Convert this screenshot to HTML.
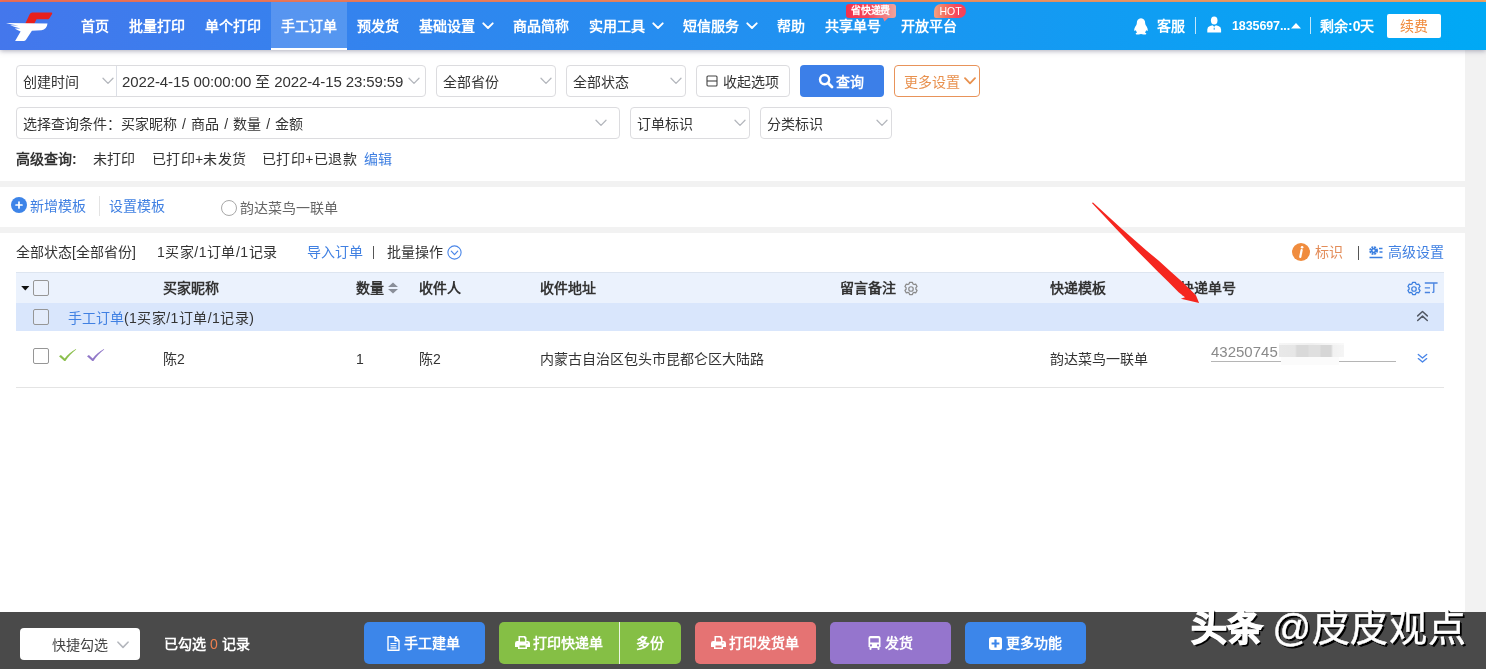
<!DOCTYPE html>
<html lang="zh-CN">
<head>
<meta charset="utf-8">
<title>手工订单</title>
<style>
*{box-sizing:border-box;margin:0;padding:0}
html,body{width:1486px;height:669px;overflow:hidden}
body{font-family:"Liberation Sans",sans-serif;font-size:14px;color:#333;background:#f2f2f2;position:relative}
.abs{position:absolute}
.t{position:absolute;white-space:nowrap;line-height:20px;height:20px}
.b{font-weight:bold}
.blue{color:#4080e2}
/* top */
#topline{left:0;top:0;width:1486px;height:2px;background:linear-gradient(90deg,#fa6e50,#f8a862)}
#nav{z-index:5;left:0;top:2px;width:1486px;height:48px;background:linear-gradient(90deg,#4477ec,#00a9f5);box-shadow:0 1px 5px rgba(90,90,120,.5)}
#nav .t{color:#fff;font-weight:bold;top:14px}
#tab{left:271px;top:0;width:76px;height:48px;background:rgba(255,255,255,.16);border-bottom:2px solid #fff}
.sep{position:absolute;width:1px;background:rgba(255,255,255,.75)}
/* panels */
.panel{position:absolute;left:0;width:1465px;background:#fff}
.sel{position:absolute;height:31px;border:1px solid #dcdcdf;border-radius:4px;background:#fff}
.sel .t{top:5px;left:6px;color:#333}
.chev{position:absolute;top:11px;width:12px;height:8px}
/* table */
.cb{position:absolute;width:15px;height:15px;border:1px solid #969696;border-radius:2px;background:#fff}
/* bottom */
#bot{left:0;top:612px;width:1486px;height:57px;background:#4a4a4a}
.btn{position:absolute;top:10px;height:42px;border-radius:5px;color:#fff;font-weight:bold}
.btn .t{top:10px;color:#fff}
</style>
</head>
<body>
<div id="root" style="position:absolute;left:0;top:0;width:1486px;height:669px;will-change:transform">
<div class="abs" id="topline"></div>
<div class="abs" id="nav">
  <div class="abs" id="tab"></div>
  <svg class="abs" style="left:0;top:0" width="70" height="48" viewBox="0 2 70 48">
    <path d="M32.300 12.500H51.200Q52.800 12.500 52.100 13.900L49.300 18.600Q48.900 19.200 48 19.200H36.500L34.200 23.700H25.200L29.800 14Q30.500 12.500 32.300 12.500z" fill="#e8201c"/>
    <path d="M6 22.900L47.500 23.600Q46.800 29.600 41.500 30.300L31.900 30.800L26 39.700Q25.200 40.900 23.600 40.900L15.100 41.100L20.600 31.600Q17.200 30.300 14.600 28.600L20.500 28.400Q14.500 27.100 10.200 25.300L18.500 25.600Q11.500 24.500 6 22.900z" fill="#fff"/>
  </svg>
  <svg class="abs" style="left:482px;top:20px" width="12" height="8" viewBox="0 0 12 8"><path d="M1.300 1.300L6 6L10.700 1.300" fill="none" stroke="#fff" stroke-width="1.900" stroke-linecap="round" stroke-linejoin="round"/></svg><svg class="abs" style="left:652px;top:20px" width="12" height="8" viewBox="0 0 12 8"><path d="M1.300 1.300L6 6L10.700 1.300" fill="none" stroke="#fff" stroke-width="1.900" stroke-linecap="round" stroke-linejoin="round"/></svg><svg class="abs" style="left:746px;top:20px" width="12" height="8" viewBox="0 0 12 8"><path d="M1.300 1.300L6 6L10.700 1.300" fill="none" stroke="#fff" stroke-width="1.900" stroke-linecap="round" stroke-linejoin="round"/></svg>
  <svg class="abs" style="left:1133px;top:16px" width="16" height="17" viewBox="0 0 16 17"><path d="M8 0.300C10.800 0.300 12.200 2.600 12.200 5.300C12.200 6 12.400 6.600 12.800 7.300C13.900 9 15.200 11 14.600 12.800C14.300 13.500 13.700 12.900 13.200 12.100C13.100 13.100 12.600 13.900 11.900 14.500C12.700 14.800 13.300 15.200 13.300 15.700C13.300 16.400 11.800 16.600 10.500 16.600C9.400 16.600 8.500 16.400 8 16.100C7.500 16.400 6.600 16.600 5.500 16.600C4.200 16.600 2.700 16.400 2.700 15.700C2.700 15.200 3.300 14.800 4.100 14.500C3.400 13.900 2.900 13.100 2.800 12.100C2.300 12.900 1.700 13.500 1.400 12.800C0.800 11 2.100 9 3.200 7.300C3.600 6.600 3.800 6 3.800 5.300C3.800 2.600 5.200 0.300 8 0.300z" fill="#fff"/></svg>
  <svg class="abs" style="left:1207px;top:14px" width="15" height="17" viewBox="0 0 15 17"><ellipse cx="7.200" cy="4.500" rx="3.300" ry="4.100" fill="#fff"/><path d="M0.300 16.500V13.500Q0.300 10.800 3 10L5.500 9.200L7.200 10.800L8.900 9.200L11.400 10Q14.100 10.800 14.100 13.500V16.500z" fill="#fff"/><rect x="6.700" y="11.700" width="1" height="2" fill="#12a0f5"/></svg>
  <svg class="abs" style="left:1291px;top:21px" width="10" height="6" viewBox="0 0 10 6"><path d="M0 5.500H10L5 0z" fill="#fff"/></svg>
  <div class="abs" style="left:846px;top:2px;width:50px;height:14px;border-radius:3px;background:linear-gradient(90deg,#f5304c 0%,#f3475a 45%,#f08f8f 85%,#efa59c 100%)"></div>
  <svg class="abs" style="left:882px;top:15px" width="8" height="5" viewBox="0 0 8 5"><path d="M0.500 0H7L2.500 4.500z" fill="#f07f84"/></svg>
  <span class="abs" style="left:851px;top:3px;font-size:10px;line-height:12px;color:#fff;font-weight:bold;white-space:nowrap;letter-spacing:-0.200px">省快递费</span>
  <div class="abs" style="left:934px;top:2px;width:32px;height:14px;border-radius:7px 7px 7px 2px;background:linear-gradient(90deg,#f2a184 0%,#f3705f 35%,#f5465c 70%,#f5405a 100%)"></div>
  <span class="abs" style="left:939.500px;top:2px;font-size:10.500px;line-height:14px;color:#fff;white-space:nowrap;letter-spacing:0">HOT</span>

  <span class="t" style="left:81px">首页</span>
  <span class="t" style="left:129px">批量打印</span>
  <span class="t" style="left:205px">单个打印</span>
  <span class="t" style="left:281px">手工订单</span>
  <span class="t" style="left:357px">预发货</span>
  <span class="t" style="left:419px">基础设置</span>
  <span class="t" style="left:513px">商品简称</span>
  <span class="t" style="left:589px">实用工具</span>
  <span class="t" style="left:683px">短信服务</span>
  <span class="t" style="left:777px">帮助</span>
  <span class="t" style="left:825px">共享单号</span>
  <span class="t" style="left:901px">开放平台</span>
  <span class="t" style="left:1157px">客服</span>
  <span class="t" style="left:1232px;font-size:12.500px;letter-spacing:-0.100px">1835697...</span>
  <span class="t" style="left:1320px">剩余:0天</span>
  <div class="sep" style="left:1195px;top:15px;height:17px"></div>
  <div class="sep" style="left:1310px;top:15px;height:17px"></div>
  <div class="abs" style="left:1387px;top:12px;width:54px;height:24px;background:#fff;border-radius:2px"></div>
  <span class="t" style="left:1400px;color:#f08a3c;font-weight:normal">续费</span>
</div>

<div class="panel" style="top:50px;height:131px"></div>
<div class="panel" style="top:187px;height:40px"></div>
<div class="panel" style="top:233px;height:379px"></div>


<!-- filter row 1 -->
<div class="sel" style="left:16px;top:65px;width:410px;height:32px"></div>
<div class="abs" style="left:116px;top:66px;width:1px;height:30px;background:#dcdfe6"></div>
<span class="t" style="left:23px;top:72px">创建时间</span>
<svg class="abs" style="left:102px;top:77px" width="12" height="8" viewBox="0 0 12 8"><path d="M1 1.2 L6 6.4 L11 1.2" fill="none" stroke="#b4b7bd" stroke-width="1.3" stroke-linecap="round" stroke-linejoin="round"/></svg>
<span class="t" style="left:122px;top:72px;font-size:15px;letter-spacing:-0.100px">2022-4-15 00:00:00 至 2022-4-15 23:59:59</span>
<svg class="abs" style="left:408px;top:77px" width="12" height="8" viewBox="0 0 12 8"><path d="M1 1.2 L6 6.4 L11 1.2" fill="none" stroke="#b4b7bd" stroke-width="1.3" stroke-linecap="round" stroke-linejoin="round"/></svg>
<div class="sel" style="left:436px;top:65px;width:120px;height:32px"></div>
<span class="t" style="left:443px;top:72px">全部省份</span>
<svg class="abs" style="left:540px;top:77px" width="12" height="8" viewBox="0 0 12 8"><path d="M1 1.2 L6 6.4 L11 1.2" fill="none" stroke="#b4b7bd" stroke-width="1.3" stroke-linecap="round" stroke-linejoin="round"/></svg>
<div class="sel" style="left:566px;top:65px;width:120px;height:32px"></div>
<span class="t" style="left:573px;top:72px">全部状态</span>
<svg class="abs" style="left:670px;top:77px" width="12" height="8" viewBox="0 0 12 8"><path d="M1 1.2 L6 6.4 L11 1.2" fill="none" stroke="#b4b7bd" stroke-width="1.3" stroke-linecap="round" stroke-linejoin="round"/></svg>
<div class="sel" style="left:696px;top:65px;width:94px;height:32px"></div>
<svg class="abs" style="left:706px;top:75px" width="12" height="12" viewBox="0 0 12 12"><rect x="1" y="1" width="10" height="10" rx="1" fill="none" stroke="#444" stroke-width="1.1"/><path d="M1 6H11" stroke="#444" stroke-width="1.1"/></svg>
<span class="t" style="left:723px;top:72px">收起选项</span>
<div class="abs" style="left:800px;top:65px;width:84px;height:32px;border-radius:4px;background:#3c7fe8"></div>
<svg class="abs" style="left:818px;top:73px" width="16" height="16" viewBox="0 0 16 16"><circle cx="6.6" cy="6.6" r="4.6" fill="none" stroke="#fff" stroke-width="2.4"/><path d="M10 10 L14 14" stroke="#fff" stroke-width="2.8" stroke-linecap="round"/></svg>
<span class="t b" style="left:836px;top:72px;color:#fff">查询</span>
<div class="abs" style="left:894px;top:65px;width:86px;height:32px;border-radius:4px;border:1px solid #e8935a;background:#fff"></div>
<span class="t" style="left:904px;top:72px;color:#e8914f">更多设置</span>
<svg class="abs" style="left:964px;top:77px" width="12" height="8" viewBox="0 0 12 8"><path d="M1 1.2 L6 6.4 L11 1.2" fill="none" stroke="#e8914f" stroke-width="1.8" stroke-linecap="round" stroke-linejoin="round"/></svg>
<!-- filter row 2 -->
<div class="sel" style="left:16px;top:107px;width:604px;height:32px"></div>
<span class="t" style="left:23px;top:114px;word-spacing:1.200px">选择查询条件：买家昵称 / 商品 / 数量 / 金额</span>
<svg class="abs" style="left:595px;top:119px" width="12" height="8" viewBox="0 0 12 8"><path d="M1 1.2 L6 6.4 L11 1.2" fill="none" stroke="#b4b7bd" stroke-width="1.3" stroke-linecap="round" stroke-linejoin="round"/></svg>
<div class="sel" style="left:630px;top:107px;width:120px;height:32px"></div>
<span class="t" style="left:637px;top:114px">订单标识</span>
<svg class="abs" style="left:734px;top:119px" width="12" height="8" viewBox="0 0 12 8"><path d="M1 1.2 L6 6.4 L11 1.2" fill="none" stroke="#b4b7bd" stroke-width="1.3" stroke-linecap="round" stroke-linejoin="round"/></svg>
<div class="sel" style="left:760px;top:107px;width:132px;height:32px"></div>
<span class="t" style="left:767px;top:114px">分类标识</span>
<svg class="abs" style="left:876px;top:119px" width="12" height="8" viewBox="0 0 12 8"><path d="M1 1.2 L6 6.4 L11 1.2" fill="none" stroke="#b4b7bd" stroke-width="1.3" stroke-linecap="round" stroke-linejoin="round"/></svg>
<!-- filter row 3 -->
<span class="t b" style="left:16px;top:149px">高级查询:</span>
<span class="t" style="left:93px;top:149px">未打印</span>
<span class="t" style="left:152px;top:149px;letter-spacing:0.300px">已打印+未发货</span>
<span class="t" style="left:262px;top:149px;letter-spacing:0.400px">已打印+已退款</span>
<span class="t blue" style="left:364px;top:149px">编辑</span>


<!-- template row -->
<svg class="abs" style="left:11px;top:197px" width="16" height="16" viewBox="0 0 16 16"><circle cx="8" cy="8" r="8" fill="#3d84e8"/><path d="M8 5V11M5 8H11" stroke="#fff" stroke-width="1.7" stroke-linecap="round"/></svg>
<span class="t blue" style="left:30px;top:196px">新增模板</span>
<div class="abs" style="left:99px;top:196px;width:1px;height:20px;background:#e3e3e3"></div>
<span class="t blue" style="left:109px;top:196px">设置模板</span>
<div class="abs" style="left:221px;top:200px;width:16px;height:16px;border:1px solid #a8a8a8;border-radius:50%;background:#fff"></div>
<span class="t" style="left:240px;top:198px;color:#666">韵达菜鸟一联单</span>
<!-- stats row -->
<span class="t" style="left:16px;top:242px">全部状态[全部省份]</span>
<span class="t" style="left:157px;top:242px;letter-spacing:0.500px">1买家/1订单/1记录</span>
<span class="t blue" style="left:307px;top:242px">导入订单</span>
<div class="abs" style="left:373px;top:246px;width:1px;height:13px;background:#555"></div>
<span class="t" style="left:387px;top:242px">批量操作</span>
<svg class="abs" style="left:447px;top:245px" width="15" height="15" viewBox="0 0 15 15"><circle cx="7.5" cy="7.5" r="6.6" fill="none" stroke="#4a86e8" stroke-width="1.1"/><path d="M4.300 6.2 L7.5 9.6 L10.700 6.2" fill="none" stroke="#4a86e8" stroke-width="1.2" stroke-linecap="round" stroke-linejoin="round"/></svg>
<svg class="abs" style="left:1292px;top:243px" width="18" height="18" viewBox="0 0 18 18"><circle cx="9" cy="9" r="9" fill="#f08c3e"/><path d="M9.600 7.2 L8.300 13.800" stroke="#fff" stroke-width="2.200" stroke-linecap="round"/><circle cx="10.100" cy="4.300" r="1.300" fill="#fff"/></svg>
<span class="t" style="left:1315px;top:242px;color:#e38d5a">标识</span>
<div class="abs" style="left:1358px;top:246px;width:1px;height:14px;background:#555"></div>
<svg class="abs" style="left:1369px;top:246px" width="14" height="13" viewBox="0 0 14 13"><circle cx="4.600" cy="4.600" r="3.100" fill="none" stroke="#3b7fe0" stroke-width="2.600" stroke-dasharray="1.700 0.750"/><circle cx="4.600" cy="4.600" r="2.600" fill="#3b7fe0"/><circle cx="4.600" cy="4.600" r="1.100" fill="#fff"/><path d="M10 2.500H13.500M10.500 6H13.500M0.500 11.500H13.500" stroke="#3b7fe0" stroke-width="1.500"/></svg>
<span class="t blue" style="left:1388px;top:242px">高级设置</span>
<!-- table -->
<div class="abs" style="left:16px;top:272px;width:1428px;height:31px;background:#ebf2fd;border-top:1px solid #dde5f0"></div>
<div class="abs" style="left:16px;top:303px;width:1428px;height:28px;background:#d9e6fc"></div>
<div class="abs" style="left:16px;top:387px;width:1428px;height:1px;background:#e4e4e4"></div>
<svg class="abs" style="left:21px;top:286px" width="9" height="5" viewBox="0 0 9 5"><path d="M0.200 0H8.400L4.300 4.600z" fill="#111"/></svg>
<div class="cb" style="left:33px;top:280px;width:16px;height:16px;background:#eef3fc"></div>
<span class="t b" style="left:163px;top:278px">买家昵称</span>
<span class="t b" style="left:356px;top:278px">数量</span>
<svg class="abs" style="left:388px;top:282px" width="10" height="12" viewBox="0 0 10 12"><path d="M0 5H10L5 0.500z M0 7H10L5 11.500z" fill="#8a8f99"/></svg>
<span class="t b" style="left:419px;top:278px">收件人</span>
<span class="t b" style="left:540px;top:278px">收件地址</span>
<span class="t b" style="left:840px;top:278px">留言备注</span>
<svg class="abs" style="left:902.500px;top:280.500px" width="16" height="16" viewBox="0 0 15 15"><path d="M6.2 1.2h2.6l.5 1.5 1.1.6 1.5-.4 1.3 2.2-1.1 1.2v1.4l1.1 1.2-1.3 2.2-1.5-.4-1.1.6-.5 1.5H6.2l-.5-1.5-1.1-.6-1.5.4-1.3-2.2 1.1-1.2V6.3L1.8 5.100l1.3-2.2 1.5.4 1.1-.6z" fill="none" stroke="#8a8a8a" stroke-width="1.15" stroke-linejoin="round"/><circle cx="7.5" cy="7.5" r="2.1" fill="none" stroke="#8a8a8a" stroke-width="1.15"/></svg>
<span class="t b" style="left:1050px;top:278px">快递模板</span>
<span class="t b" style="left:1180px;top:278px">快递单号</span>
<svg class="abs" style="left:1405.500px;top:280.500px" width="16" height="16" viewBox="0 0 15 15"><path d="M6.2 1.2h2.6l.5 1.5 1.1.6 1.5-.4 1.3 2.2-1.1 1.2v1.4l1.1 1.2-1.3 2.2-1.5-.4-1.1.6-.5 1.5H6.2l-.5-1.5-1.1-.6-1.5.4-1.3-2.2 1.1-1.2V6.3L1.8 5.100l1.3-2.2 1.5.4 1.1-.6z" fill="none" stroke="#3b7fe0" stroke-width="1.15" stroke-linejoin="round"/><circle cx="7.5" cy="7.5" r="2.1" fill="none" stroke="#3b7fe0" stroke-width="1.15"/></svg>
<svg class="abs" style="left:1424px;top:282px" width="14" height="12" viewBox="0 0 14 12"><path d="M0.800 1H13.600M0.800 5.800H6M0.800 10.500H6M9.800 1V10.500M9.800 10.400H8.200" fill="none" stroke="#4a84e0" stroke-width="1.300"/></svg>
<div class="cb" style="left:33px;top:309px;width:16px;height:16px;background:#e4ecfb"></div>
<span class="t" style="left:68px;top:308px"><span class="blue">手工订单</span><span style="letter-spacing:0.450px">(1买家/1订单/1记录)</span></span>
<svg class="abs" style="left:1416px;top:310px" width="13" height="12" viewBox="0 0 13 12"><path d="M1.700 5.900L6.500 1.500L11.300 5.900M1.700 10.500L6.500 6.100L11.300 10.500" fill="none" stroke="#525864" stroke-width="1.500" stroke-linecap="round" stroke-linejoin="round"/></svg>
<div class="cb" style="left:33px;top:348px;width:16px;height:16px"></div>
<svg class="abs" style="left:58px;top:348px" width="19" height="14" viewBox="0 0 19 14"><path d="M1 8.300L2.900 7L6.700 10.400C9.500 6.700 13.500 3.200 17.900 1L18.200 1.500C14 4.600 10.400 8.600 7.400 13L6.300 13.100z" fill="#8bbf4d"/></svg>
<svg class="abs" style="left:86px;top:348px" width="19" height="14" viewBox="0 0 19 14"><path d="M1 8.300L2.900 7L6.700 10.400C9.500 6.700 13.500 3.200 17.900 1L18.200 1.500C14 4.600 10.400 8.600 7.400 13L6.300 13.100z" fill="#9178c8"/></svg>
<span class="t" style="left:163px;top:349px">陈2</span>
<span class="t" style="left:356px;top:349px">1</span>
<span class="t" style="left:419px;top:349px">陈2</span>
<span class="t" style="left:540px;top:349px">内蒙古自治区包头市昆都仑区大陆路</span>
<span class="t" style="left:1050px;top:349px">韵达菜鸟一联单</span>
<span class="t" style="left:1211px;top:342px;font-size:15px;color:#8a8a8a">43250745</span>
<div class="abs" style="left:1211px;top:361px;width:185px;height:1px;background:#b5b5b5"></div>
<div class="abs" style="left:1281px;top:357px;width:58px;height:8px;background:#fbfbfb"></div>
<div class="abs" style="left:1279px;top:345px;width:65px;height:12px;background:linear-gradient(90deg,#e8e8e8 0,#e6e6e6 16px,#d9d9d9 18px,#d9d9d9 29px,#dfdfdf 30px,#dfdfdf 41px,#d6d6d6 42px,#d6d6d6 52px,#f1f1f1 54px,#f5f5f5 65px)"></div>
<div class="abs" style="left:1279px;top:343px;width:65px;height:2px;background:linear-gradient(90deg,#f6f6f6,#efefef 50%,#f9f9f9)"></div>
<svg class="abs" style="left:1417px;top:353px" width="11" height="10" viewBox="0 0 11 10"><path d="M1.300 1.500L5.500 5L9.700 1.500M1.300 5.600L5.500 9.100L9.700 5.600" fill="none" stroke="#4a86e8" stroke-width="1.350" stroke-linecap="round" stroke-linejoin="round"/></svg>
<!-- red arrow -->
<svg class="abs" style="left:1080px;top:195px;z-index:4" width="130" height="115" viewBox="1080 195 130 115"><path d="M1091.900 203.100 L1093 202.500 L1121.400 228.400 L1146.400 250.500 L1158.800 260.700 L1170.300 271.200 L1181.800 281.600 L1192.700 292.100 L1196 295.400 L1199.100 303.100 L1180.900 298.700 L1185 297.300 L1178.600 292.300 L1168.200 281.800 L1157.700 271.400 L1147.300 260.900 L1136.800 250.500 L1115.800 228.600 Z" fill="#f5261f"/></svg>

<div class="abs" id="bot">
  <div class="abs" style="left:20px;top:16px;width:120px;height:32px;background:#fff;border-radius:4px"></div>
  <span class="t" style="left:52px;top:23px;color:#444">快捷勾选</span>
  <svg class="abs" style="left:117px;top:29px" width="12" height="8" viewBox="0 0 12 8"><path d="M1 1.2 L6 6.4 L11 1.2" fill="none" stroke="#b4b7bd" stroke-width="1.6" stroke-linecap="round" stroke-linejoin="round"/></svg>
  <span class="t b" style="left:164px;top:22px;color:#fff">已勾选 <span style="color:#f0804f;font-weight:normal">0</span> 记录</span>
  <div class="btn" style="left:364px;width:121px;background:#3c86ea"></div>
  <svg class="abs" style="left:387px;top:24px" width="13" height="15" viewBox="0 0 13 15"><path d="M1 0.800H8L12 4.800V14.200H1z M8 0.800V4.800H12" fill="none" stroke="#fff" stroke-width="1.400" stroke-linejoin="round"/><path d="M3.500 7.500H9.500M3.500 9.700H9.500M3.500 11.900H9.500" stroke="#fff" stroke-width="1.100"/></svg>
  <span class="t b" style="left:404px;top:21px;color:#fff">手工建单</span>
  <div class="btn" style="left:499px;width:182px;background:#85bf45"></div>
  <div class="abs" style="left:619px;top:10px;width:1px;height:42px;background:rgba(255,255,255,.85)"></div>
  <svg class="abs" style="left:515px;top:24px" width="15" height="13" viewBox="0 0 15 13"><path d="M3.500 0H10L11.500 1.500V5H12.800Q15 5 15 7.200V11H12V13H3V11H0V7.200Q0 5 2.200 5H3.500z M5 1.500V5.500H10V2.500H9V1.500z M4.500 9.500V11.500H10.500V9.500z M12 6.300A0.700 0.700 0 1 0 12 7.700A0.700 0.700 0 1 0 12 6.300z" fill="#fff" fill-rule="evenodd"/></svg>
  <span class="t b" style="left:533px;top:21px;color:#fff">打印快递单</span>
  <span class="t b" style="left:636px;top:21px;color:#fff">多份</span>
  <div class="btn" style="left:695px;width:121px;background:#e57373"></div>
  <svg class="abs" style="left:711px;top:24px" width="15" height="13" viewBox="0 0 15 13"><path d="M3.500 0H10L11.500 1.500V5H12.800Q15 5 15 7.200V11H12V13H3V11H0V7.200Q0 5 2.200 5H3.500z M5 1.500V5.500H10V2.500H9V1.500z M4.500 9.500V11.500H10.500V9.500z M12 6.300A0.700 0.700 0 1 0 12 7.700A0.700 0.700 0 1 0 12 6.300z" fill="#fff" fill-rule="evenodd"/></svg>
  <span class="t b" style="left:729px;top:21px;color:#fff">打印发货单</span>
  <div class="btn" style="left:830px;width:121px;background:#9575cd"></div>
  <svg class="abs" style="left:868px;top:24px" width="13" height="14" viewBox="0 0 13 14"><path d="M2.500 0H10.500Q12.500 0 12.500 2V11H11.500V13Q11.500 14 10.500 14Q9.500 14 9.500 13V12H3.500V13Q3.500 14 2.500 14Q1.500 14 1.500 13V11H0.500V2Q0.500 0 2.500 0z M2.200 2.200V6.500H10.800V2.200z M3 8.300A1.100 1.100 0 1 0 3 10.500A1.100 1.100 0 1 0 3 8.300z M10 8.300A1.100 1.100 0 1 0 10 10.500A1.100 1.100 0 1 0 10 8.300z" fill="#fff" fill-rule="evenodd"/></svg>
  <span class="t b" style="left:885px;top:21px;color:#fff">发货</span>
  <div class="btn" style="left:965px;width:121px;background:#3c86ea"></div>
  <svg class="abs" style="left:989px;top:25px" width="13" height="13" viewBox="0 0 13 13"><path d="M2.500 0H10.500Q13 0 13 2.500V10.500Q13 13 10.500 13H2.500Q0 13 0 10.500V2.500Q0 0 2.500 0z M5.400 2.600V5.400H2.600V7.600H5.400V10.400H7.600V7.600H10.400V5.400H7.600V2.600z" fill="#fff" fill-rule="evenodd"/></svg>
  <span class="t b" style="left:1006px;top:21px;color:#fff">更多功能</span>
</div>
<div class="abs" style="left:1191px;top:604px;height:48px;line-height:48px;white-space:nowrap;font-size:38px;color:#fff;text-shadow:2px 2px 0 #000,1px 1px 0 #000;z-index:6"><span style="font-weight:bold;font-size:36px;-webkit-text-stroke:1.400px #fff">头条</span> <span style="-webkit-text-stroke:0.500px #fff;margin-left:-1px;letter-spacing:0.600px">@皮皮观点</span></div>

</div>
</body>
</html>
